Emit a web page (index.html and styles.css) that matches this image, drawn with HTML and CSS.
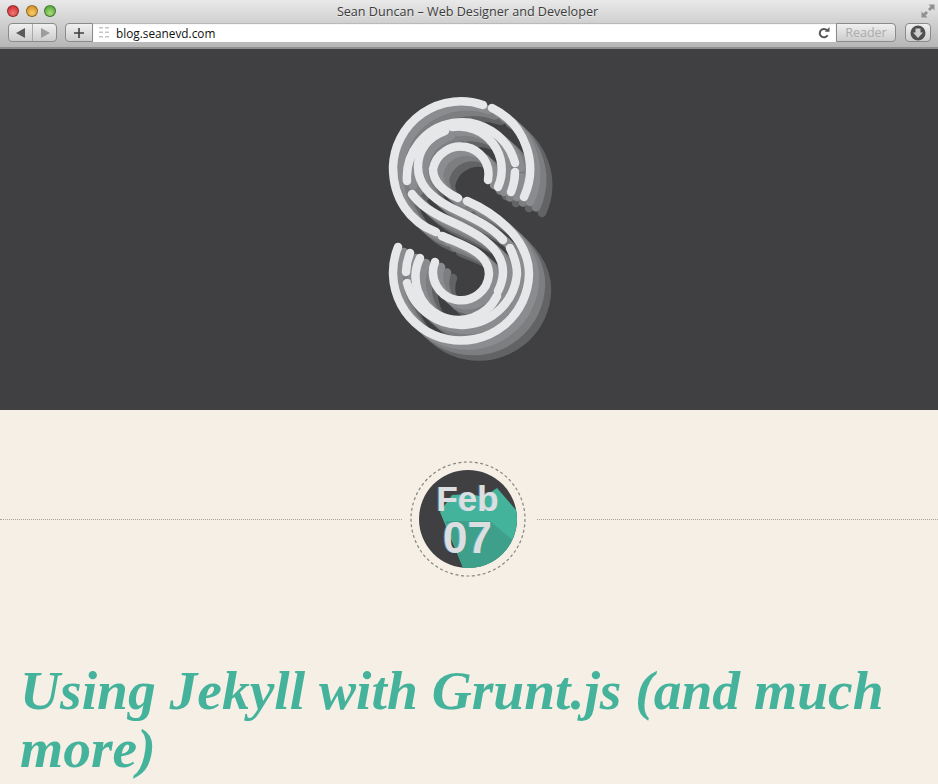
FILE: index.html
```html
<!DOCTYPE html>
<html lang="en">
<head>
  <meta charset="UTF-8">
  <title>Sean Duncan – Web Designer and Developer</title>
  <link rel="stylesheet" href="styles.css">
</head>
<body>
  <!-- Browser window chrome -->
  <header class="chrome">
    <div class="titlebar">
      <div class="lights">
        <span class="light light-red"></span>
        <span class="light light-yellow"></span>
        <span class="light light-green"></span>
      </div>
      <div class="window-title">Sean Duncan – Web Designer and Developer</div>
      <svg class="fullscreen" width="14" height="14" viewBox="0 0 14 14">
        <path d="M7.500 0.500h6v6l-2-2-2.500 2.500-2-2 2.500-2.500z M6.500 13.500h-6v-6l2 2 2.500-2.500 2 2-2.500 2.500z"/>
      </svg>
    </div>
    <div class="toolbar">
      <div class="btn nav-btns">
        <span class="nav-half">
          <svg width="10" height="10" viewBox="0 0 10 10"><path class="arrow" d="M0 5l9-5v10z"/></svg>
        </span>
        <span class="nav-half nav-next">
          <svg width="10" height="10" viewBox="0 0 10 10"><path class="arrow arrow-off" d="M10 5l-9-5v10z"/></svg>
        </span>
      </div>
      <div class="address">
        <div class="btn add-btn">
          <svg width="10" height="10" viewBox="0 0 10 10"><path d="M4.200 0h1.600v4.200h4.200v1.600h-4.200v4.200h-1.600v-4.200h-4.200v-1.600h4.200z"/></svg>
        </div>
        <div class="url-field">
          <svg class="page-icon" width="10" height="11" viewBox="0 0 10 11">
            <path d="M0 0h4v1.500h-4z M6 0h4v1.500h-4z M0 4.500h4v1.500h-4z M6 4.500h4v1.500h-4z M0 9h4v1.500h-4z M6 9h4v1.500h-4z"/>
          </svg>
          <span class="url">blog.seanevd.com</span>
          <svg class="reload" width="12" height="12" viewBox="0 0 12 12">
            <path d="M9.600 8.200a4.200 4.200 0 1 1-.6-5" fill="none" stroke="#555" stroke-width="2"/>
            <path d="M6.800 4.800h4.700v-4.700z" fill="#555"/>
          </svg>
        </div>
        <div class="btn reader-btn">Reader</div>
      </div>
      <div class="btn download-btn">
        <svg width="16" height="16" viewBox="0 0 16 16">
          <circle cx="8" cy="8" r="7.500" fill="#4f4f4f"/>
          <path d="M5.500 3.500h5v4h2.500l-5 5.500-5-5.500h2.500z" fill="#cfcfcf"/>
        </svg>
      </div>
    </div>
  </header>

  <!-- Logo banner -->
  <section class="hero">
    <svg class="logo" width="180" height="280" viewBox="379 90 180 280">
      <defs>
        <g id="mark">
          <path d="M483 105A68 68 0 0 0 393 167C393 199 410 222 436 232"/>
          <path d="M492 108A68 68 0 0 1 524 197"/>
          <path d="M407 181A55 55 0 0 1 515 163"/>
          <path d="M515 172A55 55 0 0 1 511 192"/>
          <path d="M445 131C428 137 418 150 418 167C418 186 432 198 450 207C470 217 492 226 503 240"/>
          <path d="M452 127A43 43 0 0 1 498 187"/>
          <path d="M458 198C443 191 433 181 433 169A28 28 0 0 1 488 180"/>
          <path d="M412 194C419 204 432 213 450 221C470 230 503 245 503 272C503 278 501 285 498 291"/>
          <path d="M467 201C490 211 529 236 529 274A68 68 0 1 1 398 247"/>
          <path d="M510 248C514 256 517 264 517 274A56 56 0 0 1 407 283"/>
          <path d="M410 253A55 55 0 0 0 406 272"/>
          <path d="M497 296A42 42 0 0 1 420 258"/>
          <path d="M442 236C462 245 489 252 489 274A28 28 0 1 1 435 262"/>
        </g>
      </defs>
      <use href="#mark" class="mark-far" x="18" y="16"/>
      <use href="#mark" class="mark-mid" x="12" y="10.500"/>
      <use href="#mark" class="mark-near" x="6" y="5"/>
      <use href="#mark" class="mark-top"/>
    </svg>
  </section>

  <main class="post">
    <div class="post-date">
      <div class="date-line"></div>
      <div class="date-badge">
        <svg class="date-art" width="116" height="116" viewBox="410 461 116 116">
          <defs>
            <clipPath id="date-clip"><circle cx="468" cy="519" r="49"/></clipPath>
          </defs>
          <circle class="date-ring" cx="468" cy="519" r="57"/>
          <circle class="date-disc" cx="468" cy="519" r="49"/>
          <g clip-path="url(#date-clip)">
            <path class="date-shade" d="M440 512L452 495L470 494L484 497L497 488L522 517V575H466z"/>
            <path class="date-shade-low" d="M445 521H490L522 548V575H466z"/>
          </g>
        </svg>
        <div class="date-text">
          <span class="date-month">Feb</span>
          <span class="date-day">07</span>
        </div>
      </div>
      <div class="date-line"></div>
    </div>
    <h1 class="post-title">Using Jekyll with Grunt.js (and much more)</h1>
  </main>
</body>
</html>
```
FILE: styles.css
```css
html, body {
  height: 784px;
  overflow: hidden;
}

body {
  margin: 0;
  background-color: #f5efe6;
  font-family: 'Liberation Sans', sans-serif;
}

/* browser chrome */
.chrome {
  height: 49px;
  box-sizing: border-box;
  background: linear-gradient(#e9e9e9, #d2d2d2 45%, #b6b6b6);
  border-bottom: 2px solid #8d8d8d;
}

.titlebar {
  height: 22px;
  display: grid;
  grid-template-columns: 1fr auto 1fr;
  align-items: center;
  padding-right: 3px;
}

.lights {
  display: flex;
  gap: 6.500px;
  margin-left: 7px;
}

.light {
  width: 12px;
  height: 12px;
  border-radius: 50%;
  box-sizing: border-box;
  border: 1px solid rgba(0, 0, 0, 0.35);
}

.light-red {
  background: radial-gradient(circle at 50% 70%, #f27a78, #d3383b 70%);
}

.light-yellow {
  background: radial-gradient(circle at 50% 70%, #f6ce6c, #d9982f 70%);
}

.light-green {
  background: radial-gradient(circle at 50% 70%, #a8dd7a, #5fae43 70%);
}

.window-title {
  font-family: 'Open Sans', sans-serif;
  font-size: 12.600px;
  color: #3c3c3c;
  text-shadow: 0 1px 0 rgba(255, 255, 255, 0.5);
  white-space: nowrap;
}

.fullscreen {
  justify-self: end;
  fill: #909090;
}

.toolbar {
  height: 19px;
  display: flex;
  align-items: stretch;
  padding: 1px 7px 0 8px;
}

.btn {
  box-sizing: border-box;
  display: flex;
  align-items: center;
  justify-content: center;
  background: linear-gradient(#f0f0f0, #cdcdcd);
  border: 1px solid #8b8b8b;
  border-radius: 4px;
}

.nav-btns {
  width: 49px;
}

.nav-half {
  flex: 1;
  align-self: stretch;
  display: flex;
  align-items: center;
  justify-content: center;
}

.nav-next {
  border-left: 1px solid #aaa;
}

.arrow {
  fill: #5a5a5a;
}

.arrow-off {
  fill: #9d9d9d;
}

.address {
  flex: 1;
  display: flex;
  margin-left: 8px;
}

.add-btn {
  width: 28px;
  border-radius: 4px 0 0 4px;
  fill: #3f3f3f;
}

.url-field {
  flex: 1;
  display: flex;
  align-items: center;
  background-color: #fff;
  box-shadow: inset 0 1px 1px rgba(0, 0, 0, 0.3);
  padding: 0 6px;
}

.page-icon {
  fill: #c4c4c4;
  margin-right: 7px;
}

.url {
  flex: 1;
  font-family: 'Open Sans', sans-serif;
  font-size: 11.800px;
  color: #111;
}

.reader-btn {
  width: 60px;
  border-radius: 0 4px 4px 0;
  font-family: 'Open Sans', sans-serif;
  font-size: 12.500px;
  color: #ababab;
}

.download-btn {
  width: 26px;
  margin-left: 9px;
}

/* logo banner */
.hero {
  height: 361px;
  box-sizing: border-box;
  padding-top: 41px;
  display: flex;
  justify-content: center;
  background-color: #404042;
}

.logo {
  fill: none;
  stroke-width: 8.500;
  stroke-linecap: round;
}

.mark-far {
  stroke: #626365;
}

.mark-mid {
  stroke: #7c7e80;
}

.mark-near {
  stroke: #8a8c8f;
}

.mark-top {
  stroke: #e6e7e8;
}

/* post */
.post-date {
  display: flex;
  align-items: center;
  padding-top: 51px;
}

.date-line {
  flex: 1;
  border-top: 1px dotted #a3a59a;
}

.date-badge {
  display: grid;
  width: 116px;
  height: 116px;
  margin: 0 11px 0 8px;
}

.date-art,
.date-text {
  grid-area: 1 / 1;
}

.date-ring {
  fill: none;
  stroke: #85867f;
  stroke-width: 1.200;
  stroke-dasharray: 3 2.500;
}

.date-disc {
  fill: #404042;
}

.date-shade {
  fill: #43b39b;
}

.date-shade-low {
  fill: #3e9f8b;
}

.date-text {
  display: flex;
  flex-direction: column;
  align-items: center;
  padding-top: 20px;
  font-weight: bold;
  color: #dcdfe1;
  text-shadow: -1px 0 0 rgba(150, 200, 220, 0.5);
}

.date-month {
  font-size: 35px;
  line-height: 36px;
}

.date-day {
  font-size: 44px;
  line-height: 41px;
}

.post-title {
  margin: 0;
  padding: 85px 20px 0;
  font-family: 'Liberation Serif', serif;
  font-size: 55.500px;
  font-style: italic;
  font-weight: bold;
  line-height: 58px;
  color: #45b39b;
}
```
